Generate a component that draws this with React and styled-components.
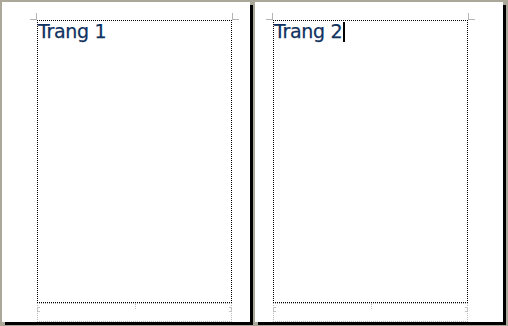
import React from 'react';
import styled, { createGlobalStyle, css } from 'styled-components';

const GlobalStyle = createGlobalStyle`
    html, body {
        margin: 0;
        padding: 0;
        background: #aca899;
    }
    body {
        font-family: 'DejaVu Sans', Verdana, sans-serif;
    }
`;

// crisp 1-on/1-off dotted frame, like the editor draws its text boundaries
const dottedFrame = color => css`
    background:
        repeating-linear-gradient(90deg, ${color} 0 1px, transparent 1px 2px) left top / 100% 1px no-repeat,
        repeating-linear-gradient(90deg, ${color} 0 1px, transparent 1px 2px) left bottom / 100% 1px no-repeat,
        repeating-linear-gradient(180deg, ${color} 0 1px, transparent 1px 2px) left top / 1px 100% no-repeat,
        repeating-linear-gradient(180deg, ${color} 0 1px, transparent 1px 2px) right top / 1px 100% no-repeat;
`;

const Desktop = styled.div`
    display: flex;
    gap: 5px;
    padding: 2px 0 0 2px;
    height: 326px;
    box-sizing: border-box;
    overflow: hidden;
`;

const Page = styled.div`
    width: 248px;
    height: 320px;
    flex: none;
    box-sizing: border-box;
    background: #ffffff;
    box-shadow: 3px 3px 0 #000000;
    display: flex;
    flex-direction: column;
    padding: 18px ${p => (p.$mirror ? '35px' : '18px')} 0 ${p => (p.$mirror ? '18px' : '35px')};
`;

const MarginBox = styled.div`
    position: relative;
    height: 283px;
    box-sizing: border-box;
    padding: 1px;
    ${dottedFrame('#000000')}
`;

const CornerMark = styled.span`
    position: absolute;
    top: -7px;
    width: 6px;
    height: 6px;
    border-bottom: 1px solid #b4b4b4;
    ${p => (p.$side === 'left'
        ? 'left: -7px; border-right: 1px solid #b4b4b4;'
        : 'right: -7px; border-left: 1px solid #b4b4b4;')}
`;

const Heading = styled.div`
    font-family: 'DejaVu Sans', Verdana, sans-serif;
    font-size: 19px;
    line-height: 21px;
    color: #0f3260;
    -webkit-text-stroke: 0.25px #0f3260;
    letter-spacing: -0.3px;
    white-space: nowrap;
`;

const Caret = styled.span`
    display: inline-block;
    width: 2px;
    height: 20px;
    margin-left: 1px;
    background: #000000;
    vertical-align: -4px;
`;

const Footer = styled.div`
    position: relative;
    height: 19px;
    box-sizing: border-box;
    ${dottedFrame('#b8b8b8')}
`;

const TabMark = styled.span`
    position: absolute;
    top: 4px;
    width: 2px;
    height: 3px;
    border-top: 1px solid #c4c4c4;
    border-bottom: 1px solid #c4c4c4;
    ${p => (p.$side === 'left'
        ? 'left: 0; border-left: 1px solid #c4c4c4;'
        : 'right: 0; border-right: 1px solid #c4c4c4;')}
`;

const CenterMark = styled.span`
    position: absolute;
    top: 1px;
    left: 50%;
    width: 1px;
    height: 5px;
    background: repeating-linear-gradient(180deg, #c4c4c4 0 1px, transparent 1px 2px);
`;

const PageSheet = ({ title, mirror, caret }) => (
    <Page $mirror={mirror}>
        <MarginBox>
            <CornerMark $side="left" />
            <CornerMark $side="right" />
            <Heading>
                {title}
                {caret && <Caret />}
            </Heading>
        </MarginBox>
        <Footer>
            <TabMark $side="left" />
            <CenterMark />
            <TabMark $side="right" />
        </Footer>
    </Page>
);

const App = () => {
    return (
        <>
            <GlobalStyle />
            <Desktop>
                <PageSheet title="Trang 1" />
                <PageSheet title="Trang 2" mirror caret />
            </Desktop>
        </>
    );
};

export default App;
